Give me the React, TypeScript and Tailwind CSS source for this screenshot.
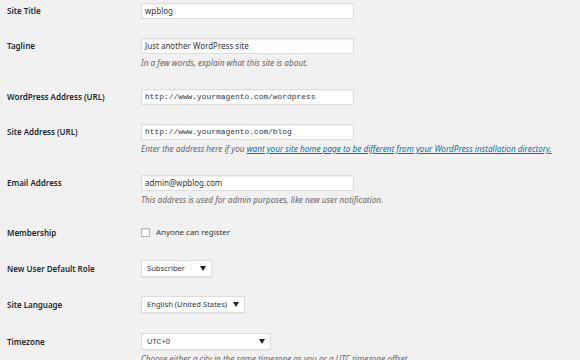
import React from 'react'

type RowProps = {
  label: string,
  children: React.ReactNode,
  desc?: React.ReactNode,
  height?: string,
  pb?: string,
}

const font = { fontFamily: '"Noto Sans", "Open Sans", sans-serif' }

function Row({ label, children, desc, height = 'h-4', pb = 'pb-[19px]' }: RowProps) {
  return (
    <div className={`flex ${pb}`}>
      <div className={`w-[141px] shrink-0 pl-[7px] ${height} flex items-center text-[8px] font-semibold text-[#23282d]`}>
        {label}
      </div>
      <div className="flex flex-col">
        <div className={`${height} flex items-center`}>{children}</div>
        {desc && (
          <p className="mt-[2px] h-[14px] leading-[14px] text-[8.2px] italic text-[#666] whitespace-nowrap">{desc}</p>
        )}
      </div>
    </div>
  )
}

function TextInput({ value, mono }: { value: string, mono?: boolean }) {
  return (
    <div
      className={`w-[213px] h-4 bg-white border border-[#ddd] shadow-[inset_0_1px_2px_rgba(0,0,0,0.07)] pl-[3px] flex items-center whitespace-nowrap text-[#32373c] ${mono ? 'text-[7.9px]' : 'text-[8px]'}`}
      style={mono ? { fontFamily: '"Liberation Mono", monospace' } : undefined}
    >
      {value}
    </div>
  )
}

function Select({ value, width }: { value: string, width: string }) {
  return (
    <div className={`${width} h-[17px] bg-white border border-[#ddd] shadow-[0_1px_1px_rgba(0,0,0,0.04)] pl-[5px] pr-[5px] flex items-center justify-between whitespace-nowrap text-[7.6px] text-[#32373c]`}>
      <span>{value}</span>
      <svg width="6" height="5" viewBox="0 0 6 5" className="shrink-0">
        <path d="M0 0 H6 L3 5 Z" fill="#222" />
      </svg>
    </div>
  )
}

export default function App() {
  return (
    <div className="w-[580px] h-[360px] overflow-hidden bg-[#f1f1f1] pt-[3px]" style={font}>
      <Row label="Site Title">
        <TextInput value="wpblog" />
      </Row>
      <Row label="Tagline" desc="In a few words, explain what this site is about.">
        <TextInput value="Just another WordPress site" />
      </Row>
      <Row label="WordPress Address (URL)">
        <TextInput value="http://www.yourmagento.com/wordpress" mono />
      </Row>
      <Row
        label="Site Address (URL)"
        desc={
          <>
            Enter the address here if you{' '}
            <a className="text-[#0073aa] underline">want your site home page to be different from your WordPress installation directory.</a>
          </>
        }
      >
        <TextInput value="http://www.yourmagento.com/blog" mono />
      </Row>
      <Row label="Email Address" desc="This address is used for admin purposes, like new user notification.">
        <TextInput value="admin@wpblog.com" />
      </Row>
      <Row label="Membership" height="h-[14px]" pb="pb-[20px]">
        <label className="flex items-center gap-[6px] text-[7.9px] text-[#32373c]">
          <span className="w-[9px] h-[9px] bg-white border border-[#b4b9be] shadow-[inset_0_1px_2px_rgba(0,0,0,0.1)]" />
          Anyone can register
        </label>
      </Row>
      <Row label="New User Default Role" height="h-[17px]">
        <Select value="Subscriber" width="w-[71px]" />
      </Row>
      <Row label="Site Language" height="h-[17px]" pb="pb-[20px]">
        <Select value="English (United States)" width="w-[104px]" />
      </Row>
      <Row label="Timezone" height="h-[17px]" desc="Choose either a city in the same timezone as you or a UTC timezone offset.">
        <Select value="UTC+0" width="w-[130px]" />
      </Row>
    </div>
  )
}
